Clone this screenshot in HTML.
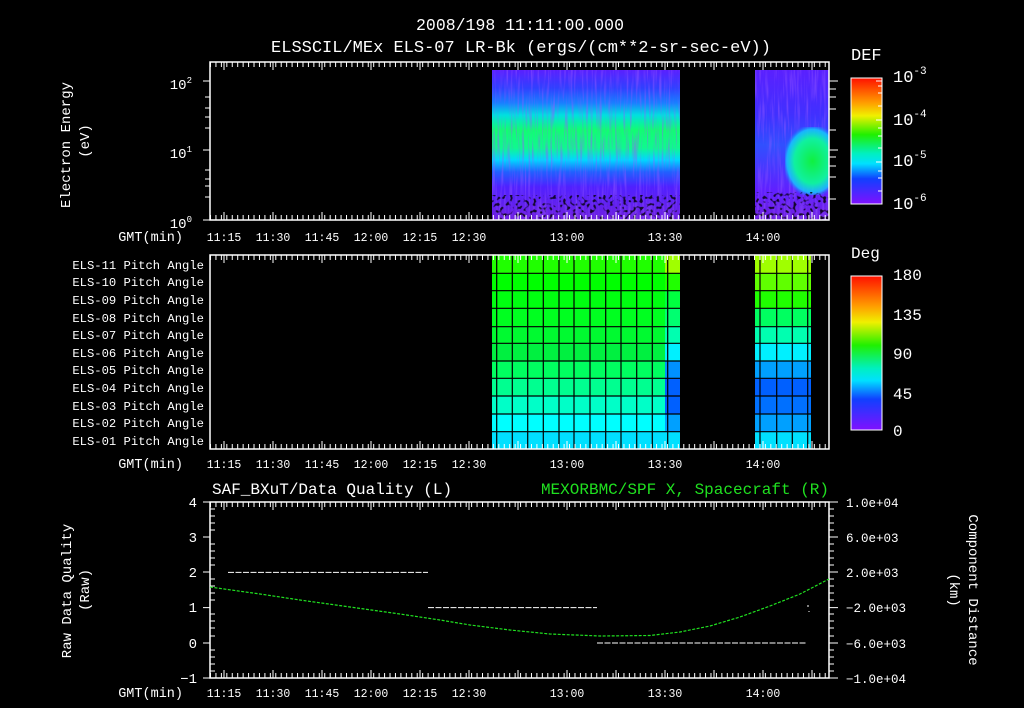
<!DOCTYPE html>
<html><head><meta charset="utf-8"><style>
html,body{margin:0;padding:0;background:#000;width:1024px;height:708px;overflow:hidden}
svg{display:block}
svg text{font-family:"Liberation Mono",monospace;fill:#fff}
</style></head><body>
<svg width="1024" height="708" viewBox="0 0 1024 708" font-size="13">
<defs>
<linearGradient id="spec" x1="0" y1="0" x2="0" y2="1">
<stop offset="0" stop-color="#5a20ff"/>
<stop offset="0.12" stop-color="#3040ff"/>
<stop offset="0.22" stop-color="#1880ff"/>
<stop offset="0.3" stop-color="#00e0e0"/>
<stop offset="0.4" stop-color="#10ff70"/>
<stop offset="0.52" stop-color="#10f890"/>
<stop offset="0.6" stop-color="#00d8ff"/>
<stop offset="0.68" stop-color="#2060ff"/>
<stop offset="0.78" stop-color="#5020ff"/>
<stop offset="1" stop-color="#7020e0"/>
</linearGradient>
<linearGradient id="spec2" x1="0" y1="0" x2="0" y2="1">
<stop offset="0" stop-color="#5a20ff"/>
<stop offset="0.3" stop-color="#4030ff"/>
<stop offset="0.5" stop-color="#3050ff"/>
<stop offset="0.8" stop-color="#6020ff"/>
<stop offset="1" stop-color="#7020e0"/>
</linearGradient>
<radialGradient id="blob" cx="0.5" cy="0.5" r="0.55">
<stop offset="0" stop-color="#10f040"/>
<stop offset="0.6" stop-color="#10f0a0"/>
<stop offset="0.85" stop-color="#10d0ff" stop-opacity="0.8"/>
<stop offset="1" stop-color="#2060ff" stop-opacity="0"/>
</radialGradient>
<linearGradient id="cb1" x1="0" y1="0" x2="0" y2="1">
<stop offset="0" stop-color="#ff1000"/>
<stop offset="0.2" stop-color="#ffa000"/>
<stop offset="0.3" stop-color="#f0f000"/>
<stop offset="0.45" stop-color="#20f000"/>
<stop offset="0.6" stop-color="#00f0c0"/>
<stop offset="0.68" stop-color="#00e0ff"/>
<stop offset="0.8" stop-color="#1040ff"/>
<stop offset="1" stop-color="#8010ff"/>
</linearGradient>
<pattern id="tk" x="210" y="0" width="5.44" height="10" patternUnits="userSpaceOnUse">
<rect x="0" y="0" width="1" height="10" fill="#fff"/>
</pattern>
<filter id="nz" x="0" y="0" width="100%" height="100%">
<feTurbulence type="fractalNoise" baseFrequency="0.45 0.03" numOctaves="2" seed="4"/>
<feColorMatrix type="matrix" values="0 0 0 0 0.3  0 0 0 0 0.1  0 0 0 0 1  0 0 0 -3 1.6"/>
</filter>
<filter id="nzb" x="0" y="0" width="100%" height="100%">
<feTurbulence type="fractalNoise" baseFrequency="0.3 0.3" numOctaves="1" seed="7"/>
<feColorMatrix type="matrix" values="0 0 0 0 0  0 0 0 0 0  0 0 0 0 0  0 0 0 -7 3.2"/>
</filter>
</defs>

<text x="520" y="30" text-anchor="middle" style="font-size:16.5px">2008/198 11:11:00.000</text>
<text x="521" y="52" text-anchor="middle" style="font-size:17px">ELSSCIL/MEx ELS-07 LR-Bk  (ergs/(cm**2-sr-sec-eV))</text>

<!-- TOP PANEL -->
<rect x="492" y="70" width="188" height="150" fill="url(#spec)"/>
<rect x="492" y="70" width="188" height="150" filter="url(#nz)" opacity="0.5"/>
<rect x="492" y="195" width="188" height="25" filter="url(#nzb)" opacity="0.8"/>
<rect x="755" y="70" width="74" height="150" fill="url(#spec2)"/>
<rect x="755" y="70" width="74" height="150" filter="url(#nz)" opacity="0.5"/>
<rect x="785" y="127" width="55" height="68" fill="url(#blob)"/>
<rect x="755" y="192" width="74" height="28" filter="url(#nzb)" opacity="0.8"/>
<rect x="829" y="60" width="20" height="165" fill="#000"/>
<rect x="210" y="62" width="619" height="158" fill="none" stroke="#fff" stroke-width="1.5"/>
<rect x="210" y="62" width="619" height="5" fill="url(#tk)"/>
<rect x="210" y="215" width="619" height="5" fill="url(#tk)"/>
<g stroke="#fff" stroke-width="1">
<path d="M224 62v8M273 62v8M322 62v8M371 62v8M420 62v8M469 62v8M518 62v8M567 62v8M616 62v8M665 62v8M714 62v8M763 62v8M812 62v8"/>
<path d="M224 220v-8M273 220v-8M322 220v-8M371 220v-8M420 220v-8M469 220v-8M518 220v-8M567 220v-8M616 220v-8M665 220v-8M714 220v-8M763 220v-8M812 220v-8"/>
<path d="M203 81h7M205 97h5M205 108h5M205 117h5M205 128h5M203 150h7M205 170h5M205 179h5M205 186h5M205 197h5M203 220h7"/>
<path d="M829 81h9M829 89h7M829 97h7M829 109h7M829 130h7M829 150h9M829 157h7M829 166h7M829 177h7M829 199h7"/>
</g>
<text x="192" y="89" text-anchor="end" style="font-size:14px">10<tspan style="font-size:9px" dy="-6">2</tspan></text>
<text x="192" y="158" text-anchor="end" style="font-size:14px">10<tspan style="font-size:9px" dy="-6">1</tspan></text>
<text x="192" y="228" text-anchor="end" style="font-size:14px">10<tspan style="font-size:9px" dy="-6">0</tspan></text>
<text transform="translate(70,145) rotate(-90)" text-anchor="middle" style="font-size:14px">Electron Energy</text>
<text transform="translate(89,141) rotate(-90)" text-anchor="middle" style="font-size:14px">(eV)</text>
<g style="font-size:11.5px">
<text x="183" y="241" text-anchor="end" style="font-size:13.5px">GMT(min)</text>
<text x="224" y="241" text-anchor="middle">11:15</text><text x="273" y="241" text-anchor="middle">11:30</text><text x="322" y="241" text-anchor="middle">11:45</text><text x="371" y="241" text-anchor="middle">12:00</text><text x="420" y="241" text-anchor="middle">12:15</text><text x="469" y="241" text-anchor="middle">12:30</text><text x="567" y="241" text-anchor="middle">13:00</text><text x="665" y="241" text-anchor="middle">13:30</text><text x="763" y="241" text-anchor="middle">14:00</text>
</g>
<text x="851" y="60" style="font-size:17px">DEF</text>
<rect x="851" y="78" width="31" height="126" fill="url(#cb1)" stroke="#fff" stroke-width="1"/>
<g stroke="#fff"><path d="M876 81h6M878 86h4M878 93h4M878 106h4M876 120h6M878 128h4M878 136h4M878 148h4M876 162h6M878 171h4M878 178h4M878 191h4"/></g>
<text x="893" y="82" style="font-size:17px">10<tspan style="font-size:11px" dy="-8">-3</tspan></text>
<text x="893" y="125" style="font-size:17px">10<tspan style="font-size:11px" dy="-8">-4</tspan></text>
<text x="893" y="166" style="font-size:17px">10<tspan style="font-size:11px" dy="-8">-5</tspan></text>
<text x="893" y="209" style="font-size:17px">10<tspan style="font-size:11px" dy="-8">-6</tspan></text>

<!-- MIDDLE PANEL -->
<g>
<rect x="492" y="255" width="188" height="18.3" fill="#20ff00"/>
<rect x="492" y="273.3" width="188" height="17.4" fill="#00ff00"/>
<rect x="492" y="290.7" width="188" height="17.6" fill="#00ff10"/>
<rect x="492" y="308.3" width="188" height="18.4" fill="#00ff20"/>
<rect x="492" y="326.7" width="188" height="16.6" fill="#00fa30"/>
<rect x="492" y="343.3" width="188" height="17.7" fill="#00f040"/>
<rect x="492" y="361" width="188" height="17.3" fill="#00ff60"/>
<rect x="492" y="378.3" width="188" height="17.7" fill="#00ff90"/>
<rect x="492" y="396" width="188" height="18" fill="#00ffc8"/>
<rect x="492" y="414" width="188" height="17.7" fill="#00ffff"/>
<rect x="492" y="431.7" width="188" height="17.3" fill="#00e0ff"/>
</g>
<g>
<rect x="665" y="255" width="15" height="18.3" fill="#a0ff00"/>
<rect x="665" y="273.3" width="15" height="17.4" fill="#20ff00"/>
<rect x="665" y="290.7" width="15" height="17.6" fill="#00ff40"/>
<rect x="665" y="308.3" width="15" height="18.4" fill="#00ff70"/>
<rect x="665" y="326.7" width="15" height="16.6" fill="#00ffb0"/>
<rect x="665" y="343.3" width="15" height="17.7" fill="#00f0ff"/>
<rect x="665" y="361" width="15" height="17.3" fill="#0090ff"/>
<rect x="665" y="378.3" width="15" height="17.7" fill="#0060ff"/>
<rect x="665" y="396" width="15" height="18" fill="#0060ff"/>
<rect x="665" y="414" width="15" height="17.7" fill="#00a0ff"/>
<rect x="665" y="431.7" width="15" height="17.3" fill="#00e0ff"/>
</g>
<g>
<rect x="755" y="255" width="56" height="18.3" fill="#a0ff00"/>
<rect x="755" y="273.3" width="56" height="17.4" fill="#60ff00"/>
<rect x="755" y="290.7" width="56" height="17.6" fill="#20ff00"/>
<rect x="755" y="308.3" width="56" height="18.4" fill="#00ff60"/>
<rect x="755" y="326.7" width="56" height="16.6" fill="#00ffb0"/>
<rect x="755" y="343.3" width="56" height="17.7" fill="#00f0ff"/>
<rect x="755" y="361" width="56" height="17.3" fill="#00a0ff"/>
<rect x="755" y="378.3" width="56" height="17.7" fill="#0060ff"/>
<rect x="755" y="396" width="56" height="18" fill="#0070ff"/>
<rect x="755" y="414" width="56" height="17.7" fill="#00a0ff"/>
<rect x="755" y="431.7" width="56" height="17.3" fill="#00e0ff"/>
</g>
<g stroke="#000" stroke-width="1.2">
<path d="M492 273.3h188M492 290.7h188M492 308.3h188M492 326.7h188M492 343.3h188M492 361h188M492 378.3h188M492 396h188M492 414h188M492 431.7h188"/>
<path d="M755 273.3h56M755 290.7h56M755 308.3h56M755 326.7h56M755 343.3h56M755 361h56M755 378.3h56M755 396h56M755 414h56M755 431.7h56"/>
<path d="M496.7 255v194M512.3 255v194M527.7 255v194M543.3 255v194M559 255v194M574 255v194M590 255v194M605.7 255v194M621 255v194M636.7 255v194M652.3 255v194M667.7 255v194"/>
<path d="M760 255v194M776.7 255v194M792.3 255v194M807.7 255v194"/>
</g>
<rect x="210" y="255" width="619" height="194" fill="none" stroke="#fff" stroke-width="1.5"/>
<rect x="210" y="255" width="619" height="5" fill="url(#tk)"/>
<rect x="210" y="444" width="619" height="5" fill="url(#tk)"/>
<g stroke="#fff"><path d="M224 255v8M273 255v8M322 255v8M371 255v8M420 255v8M469 255v8M518 255v8M567 255v8M616 255v8M665 255v8M714 255v8M763 255v8M812 255v8M224 449v-8M273 449v-8M322 449v-8M371 449v-8M420 449v-8M469 449v-8M518 449v-8M567 449v-8M616 449v-8M665 449v-8M714 449v-8M763 449v-8M812 449v-8"/></g>
<g text-anchor="end" style="font-size:12.2px">
<text x="204" y="269">ELS-11 Pitch Angle</text>
<text x="204" y="286">ELS-10 Pitch Angle</text>
<text x="204" y="304">ELS-09 Pitch Angle</text>
<text x="204" y="322">ELS-08 Pitch Angle</text>
<text x="204" y="339">ELS-07 Pitch Angle</text>
<text x="204" y="357">ELS-06 Pitch Angle</text>
<text x="204" y="374">ELS-05 Pitch Angle</text>
<text x="204" y="392">ELS-04 Pitch Angle</text>
<text x="204" y="410">ELS-03 Pitch Angle</text>
<text x="204" y="427">ELS-02 Pitch Angle</text>
<text x="204" y="445">ELS-01 Pitch Angle</text>
</g>
<g style="font-size:11.5px">
<text x="183" y="468" text-anchor="end" style="font-size:13.5px">GMT(min)</text>
<text x="224" y="468" text-anchor="middle">11:15</text><text x="273" y="468" text-anchor="middle">11:30</text><text x="322" y="468" text-anchor="middle">11:45</text><text x="371" y="468" text-anchor="middle">12:00</text><text x="420" y="468" text-anchor="middle">12:15</text><text x="469" y="468" text-anchor="middle">12:30</text><text x="567" y="468" text-anchor="middle">13:00</text><text x="665" y="468" text-anchor="middle">13:30</text><text x="763" y="468" text-anchor="middle">14:00</text>
</g>
<text x="851" y="258" style="font-size:16px">Deg</text>
<rect x="851" y="276" width="31" height="154" fill="url(#cb1)" stroke="#fff" stroke-width="1"/>
<text x="893" y="280" style="font-size:16px">180</text>
<text x="893" y="320" style="font-size:16px">135</text>
<text x="893" y="359" style="font-size:16px">90</text>
<text x="893" y="399" style="font-size:16px">45</text>
<text x="893" y="436" style="font-size:16px">0</text>

<!-- BOTTOM PANEL -->
<text x="212" y="494" style="font-size:16px">SAF_BXuT/Data Quality (L)</text>
<text x="829" y="494" text-anchor="end" style="font-size:16px;fill:#20e020">MEXORBMC/SPF X, Spacecraft (R)</text>
<rect x="210" y="502" width="619" height="176" fill="none" stroke="#fff" stroke-width="1.5"/>
<rect x="210" y="502" width="619" height="5" fill="url(#tk)"/>
<rect x="210" y="673" width="619" height="5" fill="url(#tk)"/>
<g stroke="#fff"><path d="M224 502v8M273 502v8M322 502v8M371 502v8M420 502v8M469 502v8M518 502v8M567 502v8M616 502v8M665 502v8M714 502v8M763 502v8M812 502v8M224 678v-8M273 678v-8M322 678v-8M371 678v-8M420 678v-8M469 678v-8M518 678v-8M567 678v-8M616 678v-8M665 678v-8M714 678v-8M763 678v-8M812 678v-8"/>
<path d="M203 502h7M210 509h5M210 516h5M210 523h5M210 530h5M203 537h7M210 544h5M210 551h5M210 558h5M210 565h5M203 572h7M210 579h5M210 586h5M210 593h5M210 600h5M203 607.6h7M210 614h5M210 621h5M210 628h5M210 636h5M203 643h7M210 650h5M210 657h5M210 664h5M210 671h5M203 678h7"/>
<path d="M829 502h9M829 509h5M829 516h5M829 523h5M829 530h5M829 537h9M829 544h5M829 551h5M829 558h5M829 565h5M829 572h9M829 579h5M829 586h5M829 593h5M829 600h5M829 607.6h9M829 614h5M829 621h5M829 628h5M829 636h5M829 643h9M829 650h5M829 657h5M829 664h5M829 671h5M829 678h9"/>
</g>
<g text-anchor="end" style="font-size:14px">
<text x="197" y="507">4</text><text x="197" y="542">3</text><text x="197" y="577">2</text><text x="197" y="612">1</text><text x="197" y="648">0</text><text x="197" y="683">−1</text>
</g>
<g style="font-size:12.5px">
<text x="846" y="507">1.0e+04</text><text x="846" y="542">6.0e+03</text><text x="846" y="577">2.0e+03</text><text x="846" y="612">−2.0e+03</text><text x="846" y="648">−6.0e+03</text><text x="846" y="683">−1.0e+04</text>
</g>
<text transform="translate(71,591) rotate(-90)" text-anchor="middle" style="font-size:14px">Raw Data Quality</text>
<text transform="translate(89,590) rotate(-90)" text-anchor="middle" style="font-size:14px">(Raw)</text>
<text transform="translate(969,590) rotate(90)" text-anchor="middle" style="font-size:14px">Component Distance</text>
<text transform="translate(950,590) rotate(90)" text-anchor="middle" style="font-size:14px">(km)</text>
<g stroke="#fff" stroke-width="1" stroke-dasharray="6 1.5">
<path d="M228 572.4h200M428 607.6h169M597 643h210"/>
</g>
<path d="M808 605v2M809 611v1" stroke="#fff"/>
<path d="M210 587 L260 594 L300 600 L350 607 L400 614 L440 620 L470 625 L510 630 L550 634 L600 636 L650 635.5 L680 632 L710 626 L740 617 L770 606 L800 594 L829 579" fill="none" stroke="#20e020" stroke-width="1.2" stroke-dasharray="3 1.5"/>
<g style="font-size:11.5px">
<text x="183" y="697" text-anchor="end" style="font-size:13.5px">GMT(min)</text>
<text x="224" y="697" text-anchor="middle">11:15</text><text x="273" y="697" text-anchor="middle">11:30</text><text x="322" y="697" text-anchor="middle">11:45</text><text x="371" y="697" text-anchor="middle">12:00</text><text x="420" y="697" text-anchor="middle">12:15</text><text x="469" y="697" text-anchor="middle">12:30</text><text x="567" y="697" text-anchor="middle">13:00</text><text x="665" y="697" text-anchor="middle">13:30</text><text x="763" y="697" text-anchor="middle">14:00</text>
</g>
</svg>
</body></html>
